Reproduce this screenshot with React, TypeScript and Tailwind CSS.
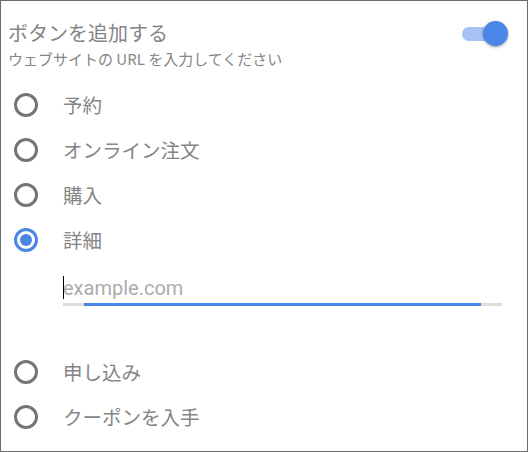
const options = [
  { label: "予約", checked: false },
  { label: "オンライン注文", checked: false },
  { label: "購入", checked: false },
  { label: "詳細", checked: true },
];

const moreOptions = ["申し込み", "クーポンを入手"];

const Radio = ({ checked }: { checked: boolean }) =>
  checked ? (
    <span className="flex h-[24px] w-[24px] items-center justify-center rounded-full border-[3px] border-[#4a86e8]">
      <span className="h-[12px] w-[12px] rounded-full bg-[#4a86e8]" />
    </span>
  ) : (
    <span className="h-[24px] w-[24px] rounded-full border-[3px] border-[#757575]" />
  );

const Row = ({ label, checked }: { label: string; checked: boolean }) => (
  <div className="flex h-[45px] items-center">
    <div className="flex w-[62px] justify-center pr-[15px] pl-[2px]">
      <Radio checked={checked} />
    </div>
    <span className="text-[19.5px] leading-none text-[#858585]">{label}</span>
  </div>
);

export default function App() {
  return (
    <div
      className="flex h-[452px] w-[528px] flex-col border border-[#6b6b6b] bg-white"
      style={{ fontFamily: '"Noto Sans CJK JP", "Noto Sans", sans-serif' }}
    >
      <div className="flex items-start justify-between pl-[7px] pr-[19px] pt-[19px]">
        <div>
          <h1 className="text-[20px] leading-[26px] text-[#858585]">ボタンを追加する</h1>
          <p className="mt-[4px] text-[15px] leading-[18px] text-[#858585]">
            ウェブサイトの URL を入力してください
          </p>
        </div>
        <div className="relative mt-[1px] h-[26px] w-[46px]">
          <span className="absolute left-[0px] top-[6px] h-[14px] w-[38px] rounded-full bg-[#a7c3f6]" />
          <span className="absolute left-[21px] top-[0px] h-[25px] w-[25px] rounded-full bg-[#4a86e8] shadow-[0_1px_3px_rgba(0,0,0,0.4)]" />
        </div>
      </div>

      <div className="mt-[14px] flex flex-col">
        {options.map((o) => (
          <Row key={o.label} label={o.label} checked={o.checked} />
        ))}
      </div>

      <div className="ml-[62px] mr-[25px] mt-[11px]">
        <div className="relative flex h-[30px] items-center">
          <span className="absolute left-[0px] top-[3px] h-[23px] w-[1px] bg-black" />
          <input
            className="w-full bg-transparent text-[20px] text-[#9e9e9e] outline-none placeholder:text-[#acacac]"
            style={{ fontFamily: "Roboto, sans-serif" }}
            placeholder="example.com"
            readOnly
          />
        </div>
        <div className="relative h-[3px] bg-[#dddddd]">
          <span className="absolute left-[21px] right-[21px] top-0 h-[3px] bg-[#4a86e8]" />
        </div>
      </div>

      <div className="mt-[43px] flex flex-col">
        {moreOptions.map((l) => (
          <Row key={l} label={l} checked={false} />
        ))}
      </div>
    </div>
  );
}
